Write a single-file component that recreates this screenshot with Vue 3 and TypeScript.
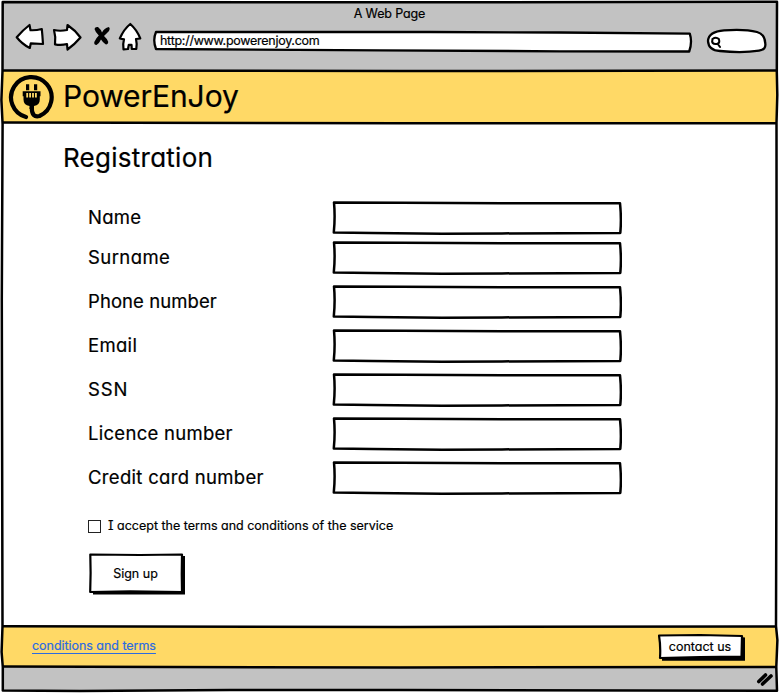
<script setup lang="ts">
import { ref } from 'vue'

interface Field {
  id: string
  label: string
  type: string
  tracking: number
}

const fields: Field[] = [
  { id: 'name', label: 'Name', type: 'text', tracking: 0.25 },
  { id: 'surname', label: 'Surname', type: 'text', tracking: 0.42 },
  { id: 'phone', label: 'Phone number', type: 'tel', tracking: 0.08 },
  { id: 'email', label: 'Email', type: 'email', tracking: 0.32 },
  { id: 'ssn', label: 'SSN', type: 'text', tracking: 0.9 },
  { id: 'licence', label: 'Licence number', type: 'text', tracking: 0.28 },
  { id: 'card', label: 'Credit card number', type: 'text', tracking: 0.31 },
]

const accepted = ref(false)
</script>

<template>
  <div class="window">
    <header class="chrome">
      <div class="title">A Web Page</div>
      <div class="toolbar">
        <svg class="nav-icons" width="130" height="34" viewBox="14 20 130 34" aria-hidden="true">
          <g fill="#fff" stroke="#000" stroke-width="2.200" stroke-linejoin="round">
            <path d="M16.700 37.200 Q23 30 29.500 25 L30.500 30.200 Q36 30.500 41.800 29 Q42.500 36 43 44 Q36 43.600 30.800 43.300 L29.800 48 Q22 44 16.700 37.200Z" />
            <path d="M54 30 Q60 31.500 67 30 L67.500 25 Q75 30 80.500 37.500 Q75 44 67.500 49.500 L67 44 Q61 45.500 55 44.300 Q56 37 54 30Z" />
            <path d="M130.300 24 Q137 30 140.300 38.500 L136 39 Q137.200 44 136.300 48.800 L131.800 49 L131.500 44.800 L128.800 44.800 L128 49 L123.500 49.300 Q122.700 44 124 39.300 L119.800 38.500 Q124 29 130.300 24Z" />
          </g>
          <path d="M94.500 29 Q95 26.500 98 27 Q101 29.500 102 32.500 Q104 28 109 27 Q110.500 28.500 109 31 Q106.500 33.500 104 36 Q107.500 39 108.300 42 Q108 45 105.500 44.300 Q102.500 42 101 39.500 Q99.500 43 96.500 45 Q93.800 45 94.300 42 Q96 38 98.800 35.500 Q95.500 32.500 94.500 29Z" />
        </svg>
        <div class="address">
          <svg class="outline" width="540" height="24" viewBox="153 30 540 24" aria-hidden="true">
            <path d="M156 32 L430 32 L560 32.500 L689.800 33.600 Q692.500 42 689.200 51.500 L560 51.300 L380 50.300 L156 49 Q152.500 40 156 32Z" fill="#fff" stroke="#000" stroke-width="2.300" stroke-linejoin="round" />
          </svg>
          <span class="url">http://www.powerenjoy.com</span>
        </div>
        <svg class="search" width="62" height="28" viewBox="705 27 62 28" aria-hidden="true">
          <path d="M708 41 Q708.500 31.500 724 30.300 Q745 28.700 757 32 Q765 34.500 765.200 43 Q766.500 49.500 759 50.700 Q742 53.200 720 51 Q708.500 50.500 708 41Z" fill="#fff" stroke="#000" stroke-width="2.300" />
          <path d="M712.500 39 Q716 36.500 718.800 39 Q720.500 43.500 716.500 44 Q711 44.500 712.500 39Z M717.500 43.500 L720 47" fill="none" stroke="#000" stroke-width="2.100" stroke-linecap="round" />
        </svg>
      </div>
    </header>

    <section class="brand">
      <svg class="logo" width="48" height="48" viewBox="8 73 48 48" aria-hidden="true">
        <path d="M26 117 A20.300 20.300 0 1 1 39.500 116 Q31.800 118 31.800 108" fill="none" stroke="#000" stroke-width="4.200" stroke-linecap="round" />
        <path d="M26 84.200h3.200v6H26z M34 84.200h3.200v6H34z" />
        <path d="M22.700 91.300H40.500V96.300H39.800V99.500 Q39.800 105.300 34 106 V109 H29.500 V106 Q23.500 105.300 23.500 99.500 V96.300 H22.700Z" />
        <path d="M27.200 93v4.500 M30.100 93v4.500 M33 93v4.500 M35.900 93v4.500" stroke="#ffd966" stroke-width="1.800" />
      </svg>
      <span class="brand-name">PowerEnJoy</span>
    </section>

    <main class="content">
      <h1>Registration</h1>
      <form @submit.prevent>
        <div v-for="f in fields" :key="f.id" class="row">
          <label :for="f.id" :style="{ letterSpacing: f.tracking + 'px' }">{{ f.label }}</label>
          <div class="field">
            <svg class="outline" width="290" height="35" viewBox="0 0 290 35" aria-hidden="true">
              <path d="M2 1.400 L70 1.700 L170 2.300 L288 2.200 Q289.600 18 288.300 32 L170 32.400 L110 32.800 L40 32 L1.800 31.400 Q3.300 16 2 1.400Z" fill="#fff" stroke="#000" stroke-width="2.500" stroke-linejoin="round" />
            </svg>
            <input :id="f.id" :type="f.type" />
          </div>
        </div>
        <label class="terms">
          <input v-model="accepted" type="checkbox" />
          <span>I accept the terms and conditions of the service</span>
        </label>
        <button class="button signup" type="submit">
          <svg class="outline" width="97" height="42" viewBox="88 553 97 42" aria-hidden="true">
            <path d="M93 591 H182 V556 H185 V594.600 H93Z" />
            <path d="M90.300 554.500 L140 555 L182 554.500 Q181.500 574 182 592 L130 591.300 L90.200 592 Q91 573 90.300 554.500Z" fill="#fff" stroke="#000" stroke-width="2.200" stroke-linejoin="round" />
          </svg>
          <span>Sign up</span>
        </button>
      </form>
    </main>

    <footer class="links">
      <a href="#">conditions and terms</a>
      <button class="button contact" type="button">
        <svg class="outline" width="88" height="28" viewBox="658 633 88 28" aria-hidden="true">
          <path d="M662 657 H741 V637 L745 637.500 V660.700 H662Z" />
          <path d="M659 635.500 L700 635 L742 636 L741.500 656.500 L700 657 L660 658 Q660.800 646 659 635.500Z" fill="#fff" stroke="#000" stroke-width="2.200" stroke-linejoin="round" />
        </svg>
        <span>contact us</span>
      </button>
    </footer>

    <div class="status">
      <svg width="18" height="16" viewBox="756 672 18 16" aria-hidden="true">
        <path d="M758.800 682.500 L765.500 676 M762.500 685 L771 677" stroke="#000" stroke-width="3.600" stroke-linecap="round" />
      </svg>
    </div>

    <svg class="frame" width="779" height="693" viewBox="0 0 779 693" aria-hidden="true">
      <g fill="none" stroke="#000" stroke-width="2.500" stroke-linejoin="round">
        <path d="M2.700 2 L400 2.300 L777 1.800 L776.800 72 L777.300 95 L776.500 123 L776.600 400 L776 626 L777.400 640 L776.300 667 L777 690.800 L400 690 L230 690 L80 691 L2.800 690.500 L2.800 667 L1.600 652 L2.500 626 L1.800 300 L2.600 124 L1.400 100 L2.500 71Z" />
        <path d="M2.500 70.500 L400 71 L777 70.600" />
        <path d="M2.500 122.500 L400 123.300 L777 123.200" />
        <path d="M2.500 626.300 L400 627 L777 626.500" />
        <path d="M2.500 666.500 L400 667.500 L777 667" />
      </g>
    </svg>
  </div>
</template>

<style>
body {
  margin: 0;
  background: #fff;
}
</style>

<style scoped>
.window {
  position: relative;
  width: 779px;
  height: 693px;
  box-sizing: border-box;
  padding: 2px;
  display: grid;
  grid-template-rows: 69px 52px 503px 41px 23px;
  overflow: hidden;
  color: #000;
  font: 400 12.5px/16px Inter, "Liberation Sans", sans-serif;
  font-feature-settings: "cv11" 1, "calt" 0;
  -webkit-text-stroke: 0.2px currentColor;
}

.frame {
  position: absolute;
  inset: 0;
  pointer-events: none;
}

.outline {
  position: absolute;
  inset: 0;
}

.chrome {
  background: #c2c2c2;
}

.title {
  height: 17px;
  padding-top: 4px;
  text-align: center;
  letter-spacing: -0.12px;
}

.toolbar {
  display: flex;
  align-items: flex-start;
  padding-left: 12px;
}

.nav-icons {
  margin-top: -3px;
}

.address {
  position: relative;
  width: 540px;
  height: 24px;
  margin: 7px 12px 0 9px;
}

.url {
  position: relative;
  display: block;
  padding: 3px 0 0 7px;
  letter-spacing: -0.27px;
}

.search {
  margin-top: 4px;
}

.brand {
  display: flex;
  align-items: center;
  gap: 7px;
  padding-left: 6px;
  background: #ffd966;
}

.brand-name {
  margin-top: -2px;
  font-size: 30px;
  line-height: 36px;
  letter-spacing: -0.12px;
}

.content {
  padding: 19px 0 0 61px;
}

h1 {
  margin: 0;
  font-size: 26px;
  font-weight: 400;
  line-height: 32px;
  letter-spacing: 0.26px;
}

form {
  padding: 27px 0 0 25px;
}

.row {
  display: flex;
  height: 35px;
  margin-bottom: 9px;
  font-size: 18.5px;
  line-height: 32px;
}

.row:first-child {
  margin-bottom: 5px;
}

.row label {
  width: 244px;
}

.field {
  position: relative;
  width: 290px;
}

.field input {
  position: relative;
  box-sizing: border-box;
  width: 290px;
  height: 35px;
  padding: 4px 8px;
  border: 0;
  outline: 0;
  background: transparent;
  font: inherit;
}

.terms {
  display: flex;
  align-items: center;
  gap: 7px;
  width: max-content;
  margin-top: 22px;
  font-feature-settings: "cv11" 1, "cv08" 1, "calt" 0;
}

.terms input {
  appearance: none;
  box-sizing: border-box;
  width: 13px;
  height: 13px;
  margin: 0;
  border: 1px solid #222;
  background: #fff;
}

.terms input:checked {
  background: #222;
}

.button {
  position: relative;
  padding: 0;
  border: 0;
  background: transparent;
  color: inherit;
  font: inherit;
  font-feature-settings: inherit;
}

.button span {
  position: relative;
}

.signup {
  display: block;
  width: 97px;
  height: 42px;
  margin-top: 19px;
  padding-right: 2px;
}

.links {
  display: flex;
  justify-content: space-between;
  align-items: center;
  padding: 0 31px 0 30px;
  background: #ffd966;
}

.links a {
  margin-top: -2px;
  color: #2b6be0;
  letter-spacing: -0.04px;
  text-underline-offset: 3px;
}

.contact {
  width: 88px;
  height: 28px;
  padding-right: 4px;
}

.status {
  display: flex;
  justify-content: flex-end;
  align-items: center;
  padding-right: 3px;
  background: #c2c2c2;
}
</style>
